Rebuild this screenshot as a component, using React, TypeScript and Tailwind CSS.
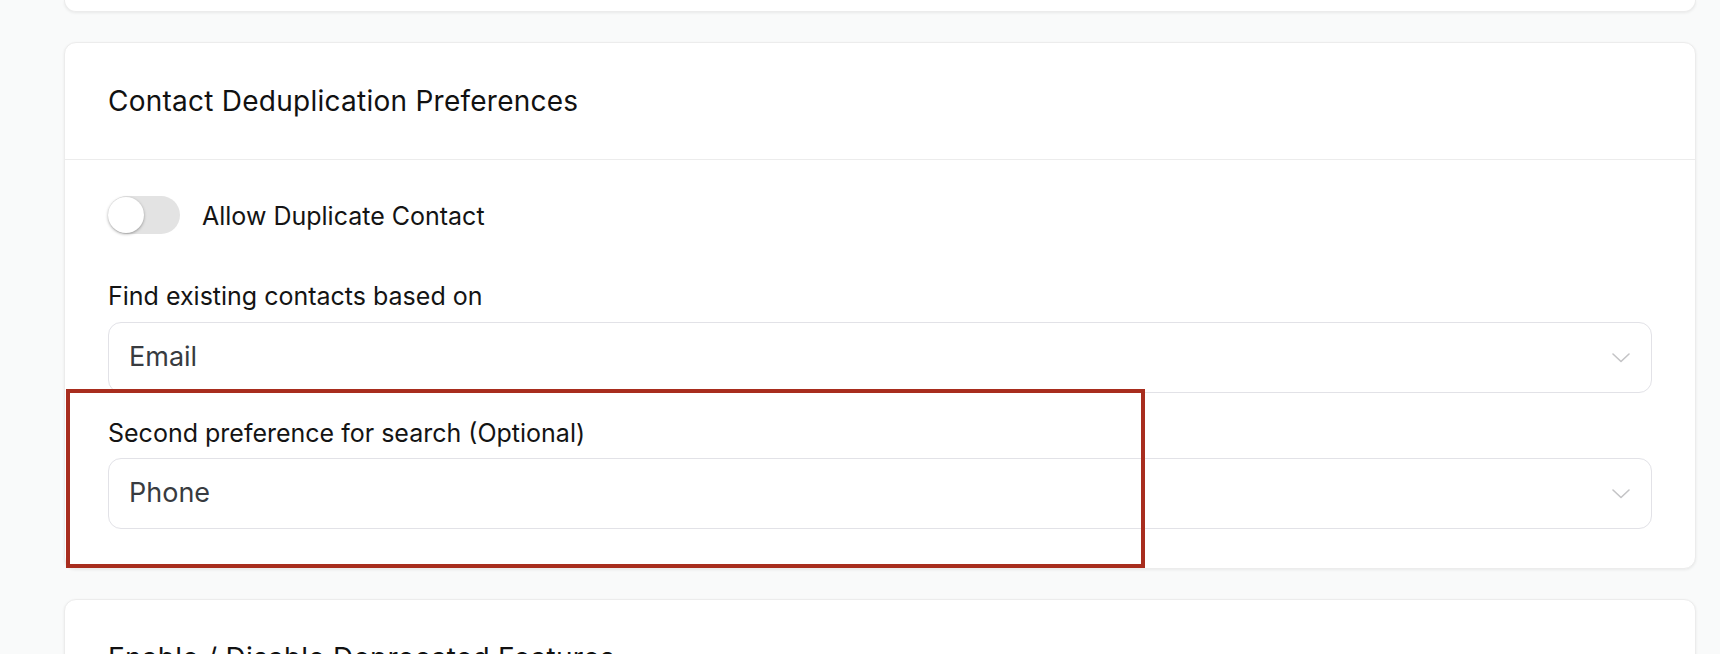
import React from "react";

function Chevron() {
  return (
    <svg width="18" height="10" viewBox="0 0 18 10" fill="none">
      <polyline points="1,1 9,8.5 17,1" stroke="#c4c4c6" strokeWidth="1.6" strokeLinecap="round" strokeLinejoin="round" />
    </svg>
  );
}

function Select({ value }: { value: string }) {
  return (
    <div className="flex h-[71px] items-center justify-between rounded-[13px] border border-[#e2e2e7] bg-white pl-[20px] pr-[21px]">
      <span className="text-[27px] text-[#383b40]">{value}</span>
      <Chevron />
    </div>
  );
}

function Toggle() {
  return (
    <div className="relative h-[38px] w-[72px] rounded-full bg-[#e3e3e3]">
      <div className="absolute left-0 top-[1px] h-[36px] w-[36px] rounded-full bg-white shadow-[0_1px_3px_rgba(0,0,0,0.35)]" />
    </div>
  );
}

export default function App() {
  return (
    <div
      className="flex h-[654px] flex-col gap-[30px] overflow-hidden bg-[#f9fafa] pl-[64px] pr-[24px]"
      style={{ fontFamily: "Inter, 'Noto Sans', sans-serif" }}
    >
      <div className="h-[12px] shrink-0 rounded-b-[12px] border border-t-0 border-[#ececec] bg-white shadow-[0_1px_3px_rgba(0,0,0,0.07)]" />

      <div className="relative shrink-0 rounded-[12px] border border-[#ececec] bg-white shadow-[0_1px_3px_rgba(0,0,0,0.07)]">
        <div className="border-b border-[#ececec] px-[43px] pb-[40px] pt-[40px]">
          <h2 className="text-[28px] font-normal leading-[36px] tracking-[0.25px] text-[#111111]">Contact Deduplication Preferences</h2>
        </div>
        <div className="px-[43px] pb-[39px] pt-[36px]">
          <div className="flex h-[38px] items-center gap-[22px]">
            <Toggle />
            <span className="pt-[2px] text-[25px] leading-[30px] text-[#141414]">Allow Duplicate Contact</span>
          </div>
          <div className="mt-[47px] text-[25px] leading-[30px] text-[#141414]">Find existing contacts based on</div>
          <div className="mt-[11px]">
            <Select value="Email" />
          </div>
          <div className="mt-[25px] text-[25px] leading-[30px] text-[#141414]">Second preference for search (Optional)</div>
          <div className="mt-[10px]">
            <Select value="Phone" />
          </div>
        </div>
        <div className="absolute left-[1px] top-[346px] h-[179px] w-[1079px] border-[4px] border-[#a82d1e]" />
      </div>

      <div className="shrink-0 rounded-[12px] border border-[#ececec] bg-white shadow-[0_1px_3px_rgba(0,0,0,0.07)]">
        <div className="border-b border-[#ececec] px-[43px] pb-[40px] pt-[40px]">
          <h2 className="text-[28px] font-normal leading-[36px] tracking-[0.25px] text-[#111111]">Enable / Disable Deprecated Features</h2>
        </div>
        <div className="h-[200px]" />
      </div>
    </div>
  );
}
